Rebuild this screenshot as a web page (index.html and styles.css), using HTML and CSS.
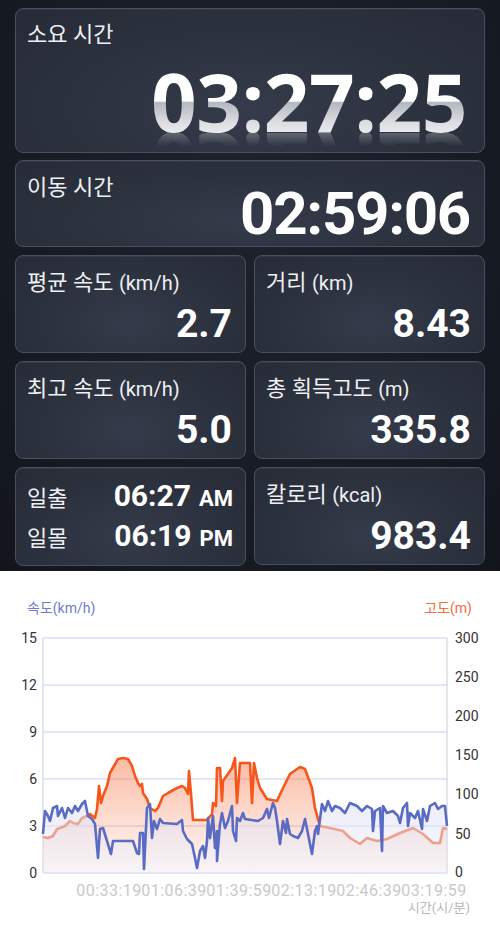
FILE: index.html
```html
<!DOCTYPE html>
<html lang="ko">
<head>
<meta charset="utf-8">
<title>기록</title>
<link rel="stylesheet" href="styles.css">
</head>
<body>
<div class="dash">
  <div class="card card-total">
    <div class="label">소요 시간</div>
    <div class="big-time">03:27:25</div>
  </div>
  <div class="card card-moving">
    <div class="label">이동 시간</div>
    <div class="mid-time">02:59:06</div>
  </div>
  <div class="grid">
    <div class="card stat">
      <div class="label">평균 속도 <span class="unit">(km/h)</span></div>
      <div class="value">2.7</div>
    </div>
    <div class="card stat">
      <div class="label">거리 <span class="unit">(km)</span></div>
      <div class="value">8.43</div>
    </div>
    <div class="card stat">
      <div class="label">최고 속도 <span class="unit">(km/h)</span></div>
      <div class="value">5.0</div>
    </div>
    <div class="card stat">
      <div class="label">총 획득고도 <span class="unit">(m)</span></div>
      <div class="value">335.8</div>
    </div>
    <div class="card sun">
      <div class="sun-row"><span class="sun-label">일출</span><span class="sun-time">06:27<span class="ampm">AM</span></span></div>
      <div class="sun-row"><span class="sun-label">일몰</span><span class="sun-time">06:19<span class="ampm">PM</span></span></div>
    </div>
    <div class="card stat">
      <div class="label">칼로리 <span class="unit">(kcal)</span></div>
      <div class="value">983.4</div>
    </div>
  </div>
</div>
<div class="chart">
  <div class="chart-head">
    <span class="speed-title">속도(km/h)</span>
    <span class="alt-title">고도(m)</span>
  </div>
  <svg class="plot" viewBox="0 617 500 308" width="500" height="308">
    <defs>
      <linearGradient id="altFill" x1="0" y1="757" x2="0" y2="872" gradientUnits="userSpaceOnUse">
        <stop offset="0" stop-color="#f7784c" stop-opacity="0.5"/>
        <stop offset="1" stop-color="#f7784c" stop-opacity="0.04"/>
      </linearGradient>
      <linearGradient id="spdFill" x1="0" y1="800" x2="0" y2="872" gradientUnits="userSpaceOnUse">
        <stop offset="0" stop-color="#dfe2f6" stop-opacity="0.62"/>
        <stop offset="1" stop-color="#eeedf6" stop-opacity="0.4"/>
      </linearGradient>
    </defs>
    <g class="grid-lines">
      <line x1="43" y1="637" x2="447" y2="637"/>
      <line x1="43" y1="684" x2="447" y2="684"/>
      <line x1="43" y1="731" x2="447" y2="731"/>
      <line x1="43" y1="778" x2="447" y2="778"/>
      <line x1="43" y1="825" x2="447" y2="825"/>
      <line x1="43" y1="872" x2="447" y2="872"/>
    </g>
    <g class="frame-lines">
      <line x1="43" y1="637" x2="43" y2="872"/>
      <line x1="447" y1="637" x2="447" y2="872"/>
    </g>
    <path fill="url(#altFill)" d="M43,836 L48,837 53,835 57,828 60,827 65,825 70,820 73,822 78,823 82,817 87,815 90,813 95,817 97,808 99,785 101,802 103,795 107,785 110,772 114,765 118,758 123,757 128,758 132,765 135,775 138,782 140,785 142,783 143,792 147,798 150,807 155,810 158,807 163,795 168,792 177,787 182,785 185,787 188,793 189,770 191,793 193,819 207,819 212,813 213,802 216,805 217,767 220,767 222,800 223,780 230,770 232,767 235,757 237,802 240,762 250,762 252,802 254,762 257,777 260,787 267,798 277,800 283,787 290,773 300,766 305,768 312,787 315,807 320,825 330,827 343,830 350,837 360,843 367,837 377,840 387,838 400,832 413,827 423,833 433,842 440,842 443,827 447,828 L447,872 L43,872 Z"/>
    <polyline class="alt-line" points="43,836 48,837 53,835 57,828 60,827 65,825 70,820 73,822 78,823 82,817 87,815 90,813 95,817 97,808 99,785 101,802 103,795 107,785 110,772 114,765 118,758 123,757 128,758 132,765 135,775 138,782 140,785 142,783 143,792 147,798 150,807 155,810 158,807 163,795 168,792 177,787 182,785 185,787 188,793 189,770 191,793 193,819 207,819 212,813 213,802 216,805 217,767 220,767 222,800 223,780 230,770 232,767 235,757 237,802 240,762 250,762 252,802 254,762 257,777 260,787 267,798 277,800 283,787 290,773 300,766 305,768 312,787 315,807 320,825 330,827 343,830 350,837 360,843 367,837 377,840 387,838 400,832 413,827 423,833 433,842 440,842 443,827 447,828"/>
    <path fill="url(#spdFill)" d="M43,833 L45,810 48,815 50,820 53,807 57,805 58,815 62,807 65,817 68,807 72,812 75,805 78,810 82,803 85,800 88,815 92,818 95,823 98,857 100,828 103,827 107,840 111,853 113,840 133,840 137,852 139,853 140,832 143,832 144,868 147,807 150,803 152,837 154,820 157,828 160,818 163,822 177,823 182,819 183,830 187,838 192,843 195,857 197,867 200,850 203,845 205,857 207,840 208,817 210,837 213,815 215,847 217,830 217,860 220,823 222,812 225,827 228,820 232,805 233,830 236,840 237,817 240,820 243,812 245,818 258,820 263,817 267,808 269,817 273,802 275,807 277,820 280,843 283,820 286,832 287,818 290,833 293,835 298,837 302,830 305,818 308,833 312,853 315,830 317,825 318,833 322,803 325,810 328,800 332,810 335,805 340,807 345,812 350,802 357,805 362,810 367,805 372,808 373,830 375,810 380,807 382,850 383,805 387,812 393,810 398,815 400,822 403,807 407,802 408,825 410,812 415,817 418,810 422,828 423,808 427,820 430,805 435,802 438,808 442,805 445,805 447,825 L447,872 L43,872 Z"/>
    <polyline class="spd-line" points="43,833 45,810 48,815 50,820 53,807 57,805 58,815 62,807 65,817 68,807 72,812 75,805 78,810 82,803 85,800 88,815 92,818 95,823 98,857 100,828 103,827 107,840 111,853 113,840 133,840 137,852 139,853 140,832 143,832 144,868 147,807 150,803 152,837 154,820 157,828 160,818 163,822 177,823 182,819 183,830 187,838 192,843 195,857 197,867 200,850 203,845 205,857 207,840 208,817 210,837 213,815 215,847 217,830 217,860 220,823 222,812 225,827 228,820 232,805 233,830 236,840 237,817 240,820 243,812 245,818 258,820 263,817 267,808 269,817 273,802 275,807 277,820 280,843 283,820 286,832 287,818 290,833 293,835 298,837 302,830 305,818 308,833 312,853 315,830 317,825 318,833 322,803 325,810 328,800 332,810 335,805 340,807 345,812 350,802 357,805 362,810 367,805 372,808 373,830 375,810 380,807 382,850 383,805 387,812 393,810 398,815 400,822 403,807 407,802 408,825 410,812 415,817 418,810 422,828 423,808 427,820 430,805 435,802 438,808 442,805 445,805 447,825"/>
    <g class="axis-left">
      <text x="37" y="642">15</text>
      <text x="37" y="689">12</text>
      <text x="37" y="736">9</text>
      <text x="37" y="783">6</text>
      <text x="37" y="830">3</text>
      <text x="37" y="877">0</text>
    </g>
    <g class="axis-right">
      <text x="455" y="642">300</text>
      <text x="455" y="681">250</text>
      <text x="455" y="720">200</text>
      <text x="455" y="759">150</text>
      <text x="455" y="798">100</text>
      <text x="455" y="838">50</text>
      <text x="455" y="876">0</text>
    </g>
    <g class="axis-x">
      <text x="109" y="895">00:33:19</text>
      <text x="174" y="895">01:06:39</text>
      <text x="239" y="895">01:39:59</text>
      <text x="304" y="895">02:13:19</text>
      <text x="369" y="895">02:46:39</text>
      <text x="434" y="895">03:19:59</text>
    </g>
    <text class="axis-x-title" x="470" y="911">시간(시/분)</text>
  </svg>
</div>
</body>
</html>
```

FILE: styles.css
```css
* { box-sizing: border-box; }
html, body { margin: 0; padding: 0; }
body {
  width: 500px;
  background: #ffffff;
  font-family: Roboto, "Noto Sans CJK KR", sans-serif;
}

.dash {
  background: radial-gradient(ellipse at 50% 30%, #1d222d 0%, #161a23 70%, #12151c 100%);
  padding: 8px 15px 5px 15px;
  display: flex;
  flex-direction: column;
  gap: 7px;
}

.card {
  border: 1px solid #4a4f5b;
  border-radius: 8px;
  background: radial-gradient(ellipse at 50% 70%, #353b4a 0%, #2c313e 55%, #262b37 100%);
  box-shadow: inset 0 1px 0 rgba(255,255,255,0.06);
  color: #f2f3f5;
}

.label {
  font-size: 22px;
  line-height: 28px;
  color: #eef0f3;
  white-space: nowrap;
}
.unit {
  font-size: 20px;
}

.card-total {
  height: 145px;
  padding: 12px 17px 0 11px;
  display: flex;
  flex-direction: column;
}
.big-time {
  align-self: flex-end;
  margin-top: 12px;
  font-family: "Open Sans", Roboto, sans-serif;
  font-weight: 700;
  font-size: 80px;
  line-height: 80px;
  letter-spacing: -0.5px;
  background: linear-gradient(180deg, #ffffff 0%, #ffffff 50%, #b3b7bf 52%, #d9dbe0 75%, #f4f5f7 100%);
  -webkit-background-clip: text;
  background-clip: text;
  color: transparent;
  -webkit-box-reflect: below -17px linear-gradient(transparent 72%, rgba(255,255,255,0.45));
}

.card-moving {
  height: 87px;
  padding: 13px 14px 0 11px;
  display: flex;
  flex-direction: column;
}
.mid-time {
  align-self: flex-end;
  margin-top: -12px;
  font-weight: 700;
  font-size: 60px;
  line-height: 48px;
  letter-spacing: -1.3px;
  color: #ffffff;
}

.grid {
  display: grid;
  grid-template-columns: 1fr 1fr;
  gap: 8px;
  margin-top: 1px;
}

.stat {
  height: 98px;
  padding: 13px 13px 0 11px;
  display: flex;
  flex-direction: column;
}
.stat .value {
  align-self: flex-end;
  margin-top: 8px;
  font-weight: 700;
  font-size: 39px;
  line-height: 39px;
  color: #ffffff;
}

.sun {
  height: 99px;
  padding: 8px 12px 0 11px;
  display: flex;
  flex-direction: column;
}
.sun-row {
  display: flex;
  justify-content: space-between;
  align-items: baseline;
  height: 40px;
  line-height: 40px;
}
.sun-label {
  font-size: 22px;
  color: #eef0f3;
}
.sun-time {
  font-weight: 700;
  font-size: 30px;
  color: #ffffff;
}
.ampm {
  font-size: 22px;
  margin-left: 8px;
}

.chart {
  background: #ffffff;
  padding-top: 27px;
}
.chart-head {
  display: flex;
  justify-content: space-between;
  padding: 0 28px 0 27px;
  font-size: 14px;
  line-height: 20px;
}
.speed-title { color: #6e7dc9; }
.alt-title { color: #f26d40; }

.plot { display: block; }
.grid-lines line { stroke: #c9cdef; stroke-width: 1.2; }
.frame-lines line { stroke: #d2d5e4; stroke-width: 1.2; }
.alt-line {
  fill: none;
  stroke: #f5561c;
  stroke-width: 2.6;
  stroke-linejoin: round;
}
.spd-line {
  fill: none;
  stroke: #5a6bc3;
  stroke-width: 2.6;
  stroke-linejoin: round;
}
.axis-left text {
  font-family: Roboto, sans-serif;
  font-size: 14px;
  fill: #333333;
  text-anchor: end;
}
.axis-right text {
  font-family: Roboto, sans-serif;
  font-size: 14px;
  fill: #333333;
  text-anchor: start;
}
.axis-x text {
  font-family: Roboto, sans-serif;
  font-size: 16px;
  letter-spacing: 0.45px;
  fill: #c9c9c9;
  text-anchor: middle;
}
.axis-x-title {
  font-family: Roboto, "Noto Sans CJK KR", sans-serif;
  font-size: 13px;
  fill: #b8b8b8;
  text-anchor: end;
}
```
